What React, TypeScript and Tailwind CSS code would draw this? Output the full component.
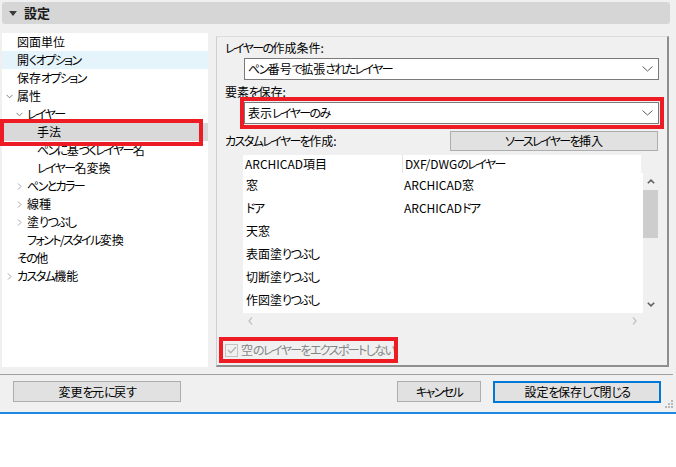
import React from "react";

const F = "font-['Noto_Sans_CJK_JP','Liberation_Sans',sans-serif] [font-feature-settings:'palt']";

function J({ t }: { t: string }) {
  const parts: { s: string; k: boolean }[] = [];
  for (const ch of t) {
    const c = ch.codePointAt(0) || 0;
    const k = (c >= 0x3040 && c <= 0x30ff) || ch === "/" || ch === ":";
    const last = parts[parts.length - 1];
    if (last && last.k === k) last.s += ch;
    else parts.push({ s: ch, k });
  }
  return (
    <>
      {parts.map((p, i) =>
        p.k ? (
          <span key={i} className="tracking-[-1.6px]">
            {p.s}
          </span>
        ) : (
          <span key={i}>{p.s}</span>
        )
      )}
    </>
  );
}

type Item = { t: string; lvl: 0 | 1 | 2; chev?: "down" | "right"; hover?: boolean; sel?: boolean };

const items: Item[] = [
  { t: "図面単位", lvl: 0 },
  { t: "開くオプション", lvl: 0, hover: true },
  { t: "保存オプション", lvl: 0 },
  { t: "属性", lvl: 0, chev: "down" },
  { t: "レイヤー", lvl: 1, chev: "down" },
  { t: "手法", lvl: 2, sel: true },
  { t: "ペンに基づくレイヤー名", lvl: 2 },
  { t: "レイヤー名変換", lvl: 2 },
  { t: "ペンとカラー", lvl: 1, chev: "right" },
  { t: "線種", lvl: 1, chev: "right" },
  { t: "塗りつぶし", lvl: 1, chev: "right" },
  { t: "フォント/スタイル変換", lvl: 1 },
  { t: "その他", lvl: 0 },
  { t: "カスタム機能", lvl: 0, chev: "right" },
];

const padCls = { 0: "pl-[3px]", 1: "pl-[13px]", 2: "pl-[23px]" } as const;

function Chev({ dir }: { dir?: "down" | "right" }) {
  return (
    <span className="w-[8px] h-[18px] mr-[4px] flex items-center justify-center">
      {dir === "down" && (
        <svg width="7" height="5" viewBox="0 0 7 5">
          <polyline points="0.5,0.8 3.5,3.8 6.5,0.8" fill="none" stroke="#808080" strokeWidth="1" />
        </svg>
      )}
      {dir === "right" && (
        <svg width="5" height="7" viewBox="0 0 5 7">
          <polyline points="1,0.5 4,3.5 1,6.5" fill="none" stroke="#a6a6a6" strokeWidth="1" />
        </svg>
      )}
    </span>
  );
}

function DropChevron() {
  return (
    <svg width="11" height="6" viewBox="0 0 11 6">
      <polyline points="0.5,0.5 5.5,5 10.5,0.5" fill="none" stroke="#606060" strokeWidth="1" />
    </svg>
  );
}

function Dropdown({ text }: { text: string }) {
  return (
    <div className="ml-[27px] w-[415px] h-[22px] bg-white border border-[#7a7a7a] flex items-center justify-between pl-[3px] pr-[5px] text-[12px] leading-[16px] text-black">
      <span>
        <J t={text} />
      </span>
      <DropChevron />
    </div>
  );
}

const rows: [string, string][] = [
  ["窓", "ARCHICAD窓"],
  ["ドア", "ARCHICADドア"],
  ["天窓", ""],
  ["表面塗りつぶし", ""],
  ["切断塗りつぶし", ""],
  ["作図塗りつぶし", ""],
];

export default function App() {
  return (
    <div className={`w-[676px] h-[467px] bg-white flex flex-col overflow-hidden ${F}`}>
      <div className="relative h-[412px] bg-[#f0f0f0] flex flex-col shrink-0">
        {/* header */}
        <div className="ml-[2px] mt-[2px] w-[668px] h-[22px] rounded-[3px] bg-[#d6d6d6] flex items-center">
          <svg className="ml-[7px]" width="8" height="5" viewBox="0 0 8 5">
            <polygon points="0,0 8,0 4,5" fill="#3a3a3a" />
          </svg>
          <span className="ml-[7px] text-[13px] font-bold text-[#1a1a1a] leading-[16px]">設定</span>
        </div>

        {/* body */}
        <div className="flex items-start mt-[9px]">
          {/* left tree */}
          <div className="ml-[2px] w-[206px] h-[334px] bg-white flex flex-col">
            {items.map((it, i) => (
              <div
                key={i}
                className={`h-[18px] flex items-center ${padCls[it.lvl]} ${it.sel ? "bg-[#d9d9d9]" : it.hover ? "bg-[#e5f3fb]" : ""}`}
              >
                <Chev dir={it.chev} />
                <span className="text-[12px] leading-[16px] text-black whitespace-nowrap">
                  <J t={it.t} />
                </span>
              </div>
            ))}
          </div>

          {/* right panel */}
          <div className="ml-[8px] mt-[3px] w-[453px] h-[331px] border-t border-l border-r-2 border-b-2 border-t-[#dcdcdc] border-l-[#cfcfcf] border-r-[#8e8e8e] border-b-[#8e8e8e] flex flex-col">
            <div className="ml-[8px] mt-[3px] h-[16px] text-[12px] leading-[16px] text-black">
              <J t="レイヤーの作成条件:" />
            </div>
            <div className="mt-[2px]">
              <Dropdown text="ペン番号で拡張されたレイヤー" />
            </div>
            <div className="ml-[8px] mt-[4px] h-[16px] text-[12px] leading-[16px] text-black">
              <J t="要素を保存:" />
            </div>
            <div className="mt-[2px]">
              <Dropdown text="表示レイヤーのみ" />
            </div>
            <div className="mt-[7px] h-[20px] flex items-center justify-between pl-[8px] pr-[9px]">
              <span className="text-[12px] leading-[16px] text-black">
                <J t="カスタムレイヤーを作成:" />
              </span>
              <div className="w-[208px] h-[20px] bg-[#e1e1e1] border border-[#adadad] flex items-center justify-center text-[12px] leading-[16px] text-black">
                <J t="ソースレイヤーを挿入" />
              </div>
            </div>

            {/* list */}
            <div className="mt-[4px] ml-[26px] w-[415px] h-[173px] flex">
              <div className="w-[400px] flex flex-col">
                <div className="h-[18px] w-[398px] bg-white flex text-[12px] leading-[16px] text-black">
                  <div className="w-[160px] border-r border-[#e3e3e3] pl-[2px] flex items-center">ARCHICAD項目</div>
                  <div className="pl-[2px] flex items-center">
                    DXF/DWG<J t="のレイヤー" />
                  </div>
                </div>
                <div className="h-[140px] bg-white flex flex-col">
                  {rows.map(([a, b], i) => (
                    <div key={i} className="h-[23px] flex items-center text-[12px] leading-[16px] text-black">
                      <div className="w-[160px] pl-[3px]">
                        <J t={a} />
                      </div>
                      <div className="pl-[1px]">
                        <J t={b} />
                      </div>
                    </div>
                  ))}
                </div>
                <div className="h-[15px] flex items-center justify-between pl-[5px] pr-[6px]">
                  <svg width="5" height="8" viewBox="0 0 5 8">
                    <polyline points="4,0.5 1,4 4,7.5" fill="none" stroke="#c6c6c6" strokeWidth="1.5" />
                  </svg>
                  <svg width="5" height="8" viewBox="0 0 5 8">
                    <polyline points="1,0.5 4,4 1,7.5" fill="none" stroke="#c6c6c6" strokeWidth="1.5" />
                  </svg>
                </div>
              </div>
              <div className="w-[15px] flex flex-col">
                <div className="h-[18px]" />
                <div className="h-[17px] flex items-center justify-center">
                  <svg width="8" height="5" viewBox="0 0 8 5">
                    <polyline points="0.8,4.3 4,1.2 7.2,4.3" fill="none" stroke="#606060" strokeWidth="1.6" />
                  </svg>
                </div>
                <div className="h-[48px] bg-[#cdcdcd]" />
                <div className="flex-1" />
                <div className="h-[17px] flex items-center justify-center">
                  <svg width="8" height="5" viewBox="0 0 8 5">
                    <polyline points="0.8,0.7 4,3.8 7.2,0.7" fill="none" stroke="#606060" strokeWidth="1.6" />
                  </svg>
                </div>
                <div className="h-[15px]" />
              </div>
            </div>

            {/* checkbox */}
            <div className="mt-[9px] h-[26px] flex items-center pl-[8px]">
              <div className="w-[13px] h-[13px] border border-[#c2c2c2] bg-[#f0f0f0] flex items-center justify-center">
                <svg width="10" height="8" viewBox="0 0 10 8">
                  <polyline points="1,4 3.8,6.8 9,1" fill="none" stroke="#b3b3b3" strokeWidth="1.3" />
                </svg>
              </div>
              <span className="ml-[3px] text-[12px] leading-[16px] text-[#858585]">
                <J t="空のレイヤーをエクスポートしない" />
              </span>
            </div>
          </div>
        </div>

        {/* separator */}
        <div className="mt-[7px] w-[673px] h-px bg-[#a0a0a0]" />

        {/* buttons */}
        <div className="mt-[6px] h-[21px] flex items-center text-[12px] leading-[16px] text-black">
          <div className="ml-[13px] w-[168px] h-[21px] bg-[#e1e1e1] border border-[#adadad] flex items-center justify-center">
            <J t="変更を元に戻す" />
          </div>
          <div className="flex-1" />
          <div className="w-[84px] h-[21px] bg-[#e1e1e1] border border-[#adadad] flex items-center justify-center">
            <J t="キャンセル" />
          </div>
          <div className="ml-[12px] mr-[15px] w-[168px] h-[22px] bg-[#e1e1e1] border-2 border-[#0078d7] flex items-center justify-center">
            <J t="設定を保存して閉じる" />
          </div>
        </div>

        {/* resize grip */}
        <svg className="absolute right-[3px] bottom-[4px]" width="8" height="8" viewBox="0 0 8 8">
          <rect x="6" y="0" width="2" height="2" fill="#b8b8b8" />
          <rect x="3" y="3" width="2" height="2" fill="#b8b8b8" />
          <rect x="6" y="3" width="2" height="2" fill="#b8b8b8" />
          <rect x="0" y="6" width="2" height="2" fill="#b8b8b8" />
          <rect x="3" y="6" width="2" height="2" fill="#b8b8b8" />
          <rect x="6" y="6" width="2" height="2" fill="#b8b8b8" />
        </svg>

        {/* red annotation boxes */}
        <div className="absolute left-0 top-[119px] w-[203px] h-[27px] border-4 border-[#ed1c24] pointer-events-none" />
        <div className="absolute left-[240px] top-[97px] w-[424px] h-[32px] border-4 border-[#ed1c24] pointer-events-none" />
        <div className="absolute left-[219px] top-[337px] w-[179px] h-[26px] border-4 border-[#ed1c24] pointer-events-none" />
      </div>
      <div className="h-[2px] bg-[#1e88e5] shrink-0" />
      <div className="flex-1 bg-white" />
    </div>
  );
}
